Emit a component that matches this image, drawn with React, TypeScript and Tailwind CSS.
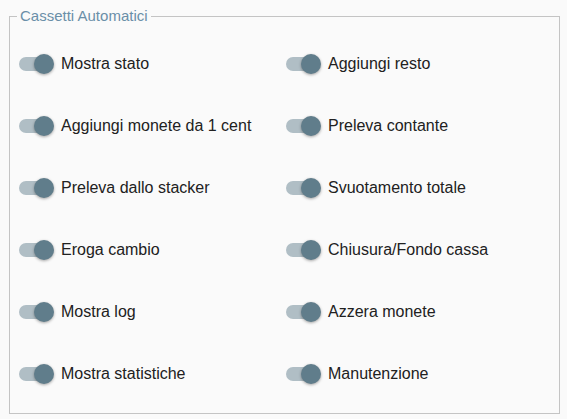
const items = [
    'Mostra stato',
    'Aggiungi resto',
    'Aggiungi monete da 1 cent',
    'Preleva contante',
    'Preleva dallo stacker',
    'Svuotamento totale',
    'Eroga cambio',
    'Chiusura/Fondo cassa',
    'Mostra log',
    'Azzera monete',
    'Mostra statistiche',
    'Manutenzione',
]

const Toggle = () => (
    <div className="relative w-[34px] h-[14px] rounded-full bg-[#b0bec5] shrink-0">
        <div className="absolute left-[15px] top-[-3px] w-[20px] h-[20px] rounded-full bg-[#607d8b] shadow-[0_1px_3px_rgba(0,0,0,0.35)]" />
    </div>
)

const App = () => {
    return (
        <div className="w-[567px] h-[419px] bg-[#fafafa] pt-[8px] pl-[9px] font-['Liberation_Sans',Arial,sans-serif]">
            <fieldset className="w-[551px] h-[406px] border border-[#c4c4c4] pl-[9px] pr-[5px] pt-[9px] m-0">
                <legend className="ml-[-2px] px-[3px] text-[15px] leading-[16px] text-[#6a8fa8]">Cassetti Automatici</legend>
                <div className="grid grid-cols-[267px_1fr]">
                    {items.map((label) => (
                        <div key={label} className="h-[62px] flex items-center gap-[8px]">
                            <Toggle />
                            <span className="text-[16px] text-[#212121]">{label}</span>
                        </div>
                    ))}
                </div>
            </fieldset>
        </div>
    )
}

export default App
